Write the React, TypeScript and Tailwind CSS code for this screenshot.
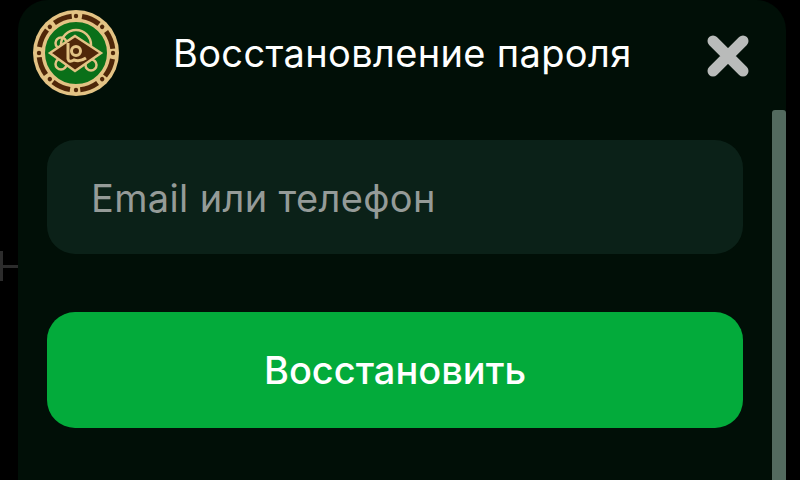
const font = { fontFamily: 'Inter, "Noto Sans", sans-serif' };

function Logo() {
  const dashes = [0, 45, 90, 135, 180, 225, 270, 315];
  return (
    <svg width="88" height="88" viewBox="0 0 88 88" className="shrink-0">
      <circle cx="44" cy="44" r="43" fill="#e3c384" />
      <circle cx="44" cy="44" r="32" fill="#0a7019" stroke="#e3c384" strokeWidth="2" />
      {dashes.map((a) => (
        <g key={a} transform={`rotate(${a} 44 44)`}>
          <circle cx="44" cy="7" r="2.2" fill="#4f2709" />
          <path d="M50 7.5 A37 37 0 0 1 67 15" fill="none" stroke="#4f2709" strokeWidth="5" />
        </g>
      ))}
      <circle cx="44" cy="36" r="15" fill="none" stroke="#e3c384" strokeWidth="2.5" />
      <circle cx="29" cy="34" r="5.5" fill="none" stroke="#e3c384" strokeWidth="2.5" />
      <circle cx="29" cy="55" r="5.5" fill="none" stroke="#e3c384" strokeWidth="2.5" />
      <circle cx="59" cy="56" r="5.5" fill="none" stroke="#e3c384" strokeWidth="2.5" />
      <path d="M43 27 L69 44 L43 62 L18 44 Z" fill="#4f2709" stroke="#e3c384" strokeWidth="2.5" />
      <circle cx="44" cy="42" r="4.5" fill="#4f2709" stroke="#e3c384" strokeWidth="3" />
      <path d="M36 34 V50 Q37 54 42 51 Q48 53 54 49" fill="none" stroke="#e3c384" strokeWidth="3" />
    </svg>
  );
}

function CloseIcon() {
  return (
    <svg width="42" height="42" viewBox="0 0 42 42" className="mt-[6px] shrink-0">
      <path d="M6 6 L36 36 M36 6 L6 36" stroke="#b9bbba" strokeWidth="11" strokeLinecap="round" />
    </svg>
  );
}

export default function App() {
  return (
    <div className="relative flex h-[480px] w-[800px] overflow-hidden bg-black pl-[18px] pr-[14px]" style={font}>
      {/* piece of the page behind the sheet */}
      <div className="absolute left-0 top-[265px] h-[3px] w-[18px] bg-[#2c2c2c]" />
      <div className="absolute left-0 top-[251px] h-[30px] w-[3px] bg-[#2c2c2c]" />

      <div className="relative flex min-w-0 flex-1 flex-col rounded-t-[30px] bg-[#010f07] pl-[29px] pr-[43px]">
        <div className="-ml-[15px] -mr-[6px] mt-[9px] flex h-[88px] items-center">
          <Logo />
          <h1 className="ml-[53px] flex-1 whitespace-nowrap text-[38px] font-normal leading-none tracking-[0.35px] text-white">
            Восстановление пароля
          </h1>
          <CloseIcon />
        </div>

        <div className="mt-[43px] flex h-[114px] items-center rounded-[28px] bg-[#0b2118] px-[44px] pt-[2px] text-[38px] leading-none tracking-[0.35px] text-[#959b98]">
          Email или телефон
        </div>

        <button
          type="button"
          className="mt-[58px] h-[116px] rounded-[28px] bg-[#03ab3b] text-[38px] font-medium leading-none text-white"
        >
          Восстановить
        </button>

        <div className="absolute bottom-0 right-0 top-[110px] w-[14px] rounded-t-[3px] bg-[#536a5f]" />
      </div>
    </div>
  );
}
